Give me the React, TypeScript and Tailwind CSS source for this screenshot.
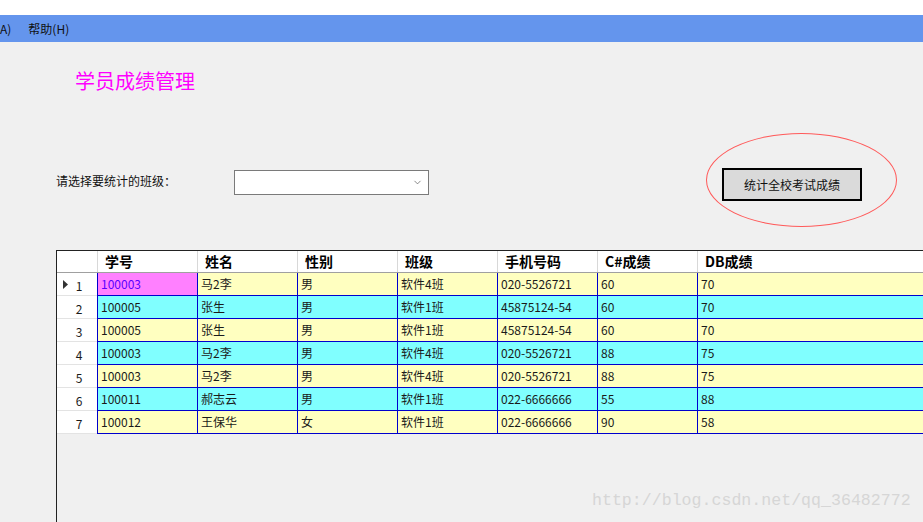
import { ChevronDown } from 'lucide-react'

type Row = {
    id: string
    name: string
    sex: string
    cls: string
    phone: string
    cs: string
    db: string
}

const rows: Row[] = [
    { id: '100003', name: '马2李', sex: '男', cls: '软件4班', phone: '020-5526721', cs: '60', db: '70' },
    { id: '100005', name: '张生', sex: '男', cls: '软件1班', phone: '45875124-54', cs: '60', db: '70' },
    { id: '100005', name: '张生', sex: '男', cls: '软件1班', phone: '45875124-54', cs: '60', db: '70' },
    { id: '100003', name: '马2李', sex: '男', cls: '软件4班', phone: '020-5526721', cs: '88', db: '75' },
    { id: '100003', name: '马2李', sex: '男', cls: '软件4班', phone: '020-5526721', cs: '88', db: '75' },
    { id: '100011', name: '郝志云', sex: '男', cls: '软件1班', phone: '022-6666666', cs: '55', db: '88' },
    { id: '100012', name: '王保华', sex: '女', cls: '软件1班', phone: '022-6666666', cs: '90', db: '58' },
]

const headers = ['学号', '姓名', '性别', '班级', '手机号码', 'C#成绩', 'DB成绩']

function GridRow({ row, index }: { row: Row; index: number }) {
    const bg = index % 2 === 0 ? 'bg-[#ffffc0]' : 'bg-[#80ffff]'
    const cells = [row.id, row.name, row.sex, row.cls, row.phone, row.cs]
    return (
        <div className="flex h-[23px]">
            <div className="relative flex w-[40px] shrink-0 items-center justify-center border-b border-[#e3e3e3] bg-white pl-[4px] text-[12px] text-[#1a1a1a]">
                {index === 0 && (
                    <svg className="absolute left-[6px] top-[7px]" width="5" height="9" viewBox="0 0 5 9">
                        <path d="M0 0 L5 4.5 L0 9 Z" fill="#333" />
                    </svg>
                )}
                <span className="mt-[3px]">{index + 1}</span>
            </div>
            {cells.map((c, i) => (
                <div
                    key={i}
                    className={`flex w-[100px] shrink-0 items-center border-b border-l border-[#0000cd] pl-[3px] text-[12px] ${
                        index === 0 && i === 0 ? 'bg-[#ff80ff] text-[#5a00ff]' : `${bg} text-[#1a1a1a]`
                    }`}
                >
                    {c}
                </div>
            ))}
            <div className={`flex flex-1 items-center border-b border-l border-[#0000cd] pl-[3px] text-[12px] text-[#1a1a1a] ${bg}`}>
                {row.db}
            </div>
        </div>
    )
}

export default function App() {
    return (
        <div
            className="relative h-[522px] w-[923px] overflow-hidden bg-[#f0f0f0] text-black"
            style={{ fontFamily: '"Noto Sans CJK SC", "Noto Sans", sans-serif' }}
        >
            <div className="h-[15px] bg-white"></div>
            <div className="flex h-[27px] items-center bg-[#6495ed] text-[12px] text-[#111]">
                <span>A)</span>
                <span className="ml-[17px]">帮助(H)</span>
            </div>

            <div className="pl-[75px] pt-[26px] text-[20px] leading-[26px] text-[#ff00ff]">学员成绩管理</div>

            <div className="mt-[74px] flex items-start pl-[56px]">
                <div className="mt-[5px] w-[178px] text-[12px] leading-[16px] text-[#111]">请选择要统计的班级：</div>
                <div className="mt-[2px] flex h-[25px] w-[195px] items-center justify-end border border-[#7a7a7a] bg-white pr-[5px]">
                    <ChevronDown size={11} strokeWidth={1.5} className="text-[#555]" />
                </div>
                <div className="ml-[293px] flex h-[33px] w-[140px] items-center justify-center border-2 border-black bg-[#dadada] text-[12px] text-[#111]">
                    统计全校考试成绩
                </div>
            </div>

            <div className="ml-[56px] mt-[49px] h-[300px] w-[900px] border-l border-t border-[#222]">
                <div className="flex h-[22px] border-b border-[#a0a0a0] bg-white text-[14px] font-bold">
                    <div className="w-[40px] shrink-0"></div>
                    {headers.map((h, i) => (
                        <div
                            key={h}
                            className={`flex items-center border-l border-[#d8d8d8] pl-[7px] ${i === headers.length - 1 ? 'flex-1' : 'w-[100px] shrink-0'}`}
                        >
                            {h}
                        </div>
                    ))}
                </div>
                {rows.map((r, i) => (
                    <GridRow key={i} row={r} index={i} />
                ))}
            </div>

            <div className="absolute left-[706px] top-[133px] h-[94px] w-[191px] rounded-[50%] border border-[#ff5a5a]"></div>

            <div
                className="absolute left-[592px] top-[490px] text-[16.6px] leading-[22px] text-[#d6d6d6]"
                style={{ fontFamily: '"Liberation Mono", monospace' }}
            >
                http://blog.csdn.net/qq_36482772
            </div>
        </div>
    )
}
